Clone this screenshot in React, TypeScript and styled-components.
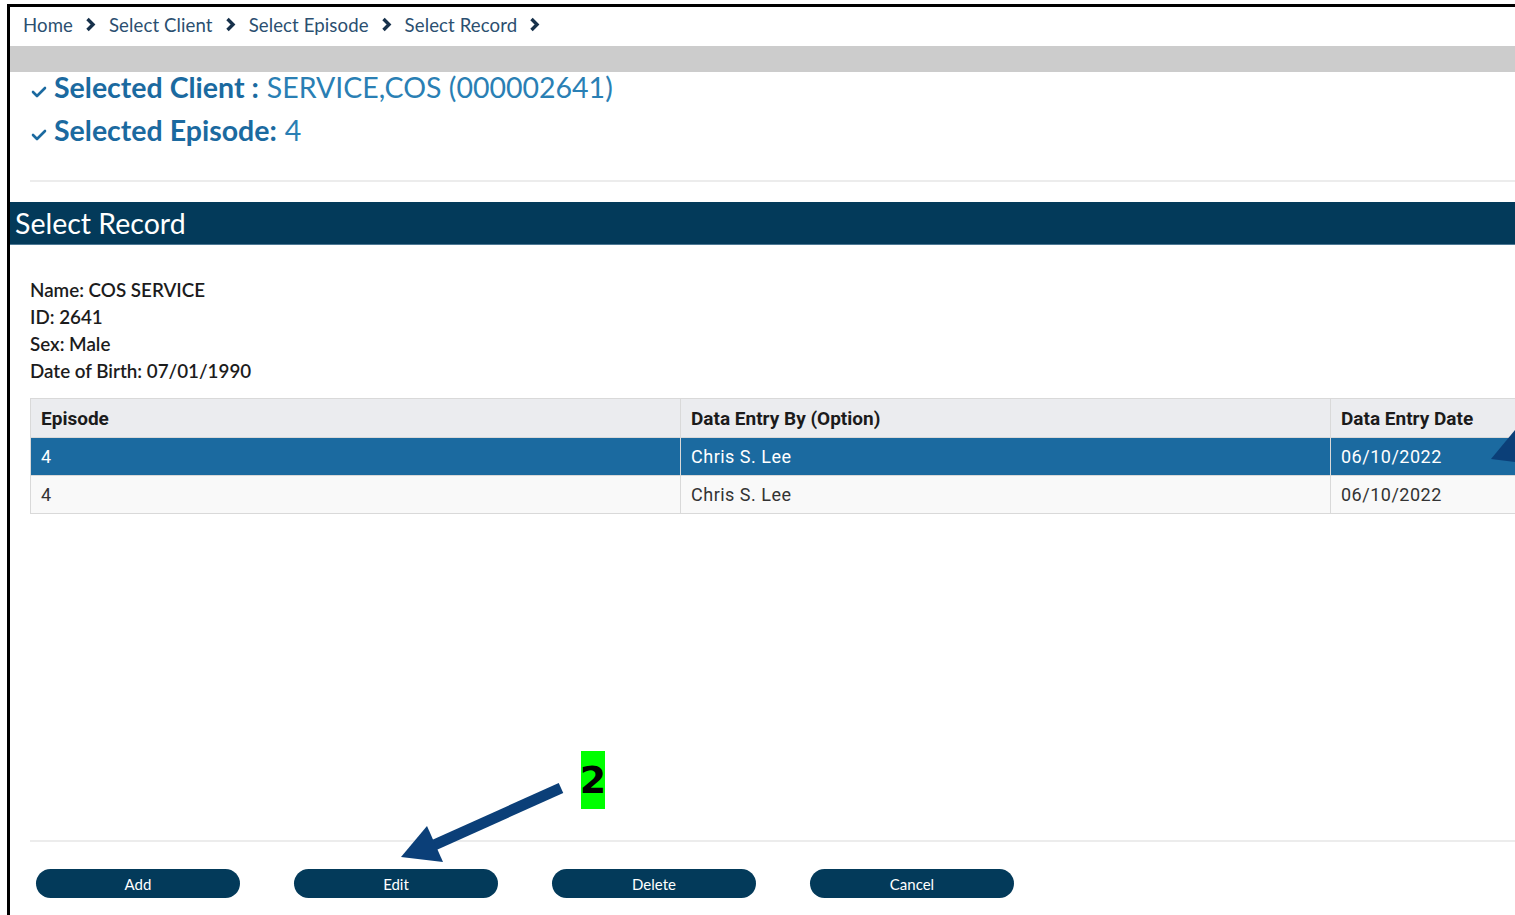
import React from "react";
import styled, { createGlobalStyle } from "styled-components";

const GlobalStyle = createGlobalStyle`
  html, body {
    margin: 0;
    padding: 0;
    background: #fff;
    font-family: Lato, "Open Sans", sans-serif;
  }
`;

interface Row {
  episode: string;
  enteredBy: string;
  date: string;
}

const rows: Row[] = [
  { episode: "4", enteredBy: "Chris S. Lee", date: "06/10/2022" },
  { episode: "4", enteredBy: "Chris S. Lee", date: "06/10/2022" },
];

const crumbs = ["Home", "Select Client", "Select Episode", "Select Record"];
const actions = ["Add", "Edit", "Delete", "Cancel"];

const Chevron = () => (
  <svg width="11" height="15" viewBox="0 0 11 15">
    <polyline points="2.5,2 8,7.5 2.5,13" fill="none" stroke="#17314b" strokeWidth="3.4" />
  </svg>
);

const Check = () => (
  <svg width="16" height="12" viewBox="0 0 16 12">
    <polyline points="2,6 6,10 14,2" fill="none" stroke="#1b6aa0" strokeWidth="2.6" strokeLinecap="round" strokeLinejoin="round" />
  </svg>
);

const App: React.FC = () => {
  return (
    <Page>
      <GlobalStyle />
      <Frame>
        <Breadcrumb>
          {crumbs.map((c) => (
            <Crumb key={c}>
              {c}
              <Chevron />
            </Crumb>
          ))}
        </Breadcrumb>
        <GrayBand />

        <Selection>
          <SelectedLine>
            <Check />
            <Label>Selected Client&nbsp;:</Label>
            <Value>SERVICE,COS (000002641)</Value>
          </SelectedLine>
          <SelectedLine>
            <Check />
            <Label>Selected Episode:</Label>
            <Value>4</Value>
          </SelectedLine>
        </Selection>
        <Divider />

        <SectionBar>Select Record</SectionBar>

        <ClientInfo>
          <div>Name: COS SERVICE</div>
          <div>ID: 2641</div>
          <div>Sex: Male</div>
          <div>Date of Birth: 07/01/1990</div>
        </ClientInfo>

        <Table>
          <colgroup>
            <col style={{ width: 650 }} />
            <col style={{ width: 650 }} />
            <col style={{ width: 260 }} />
          </colgroup>
          <thead>
            <tr>
              <HeadCell>Episode</HeadCell>
              <HeadCell>Data Entry By (Option)</HeadCell>
              <HeadCell>Data Entry Date</HeadCell>
            </tr>
          </thead>
          <tbody>
            {rows.map((r, i) => (
              <BodyRow key={i} $selected={i === 0}>
                <Cell>{r.episode}</Cell>
                <Cell>{r.enteredBy}</Cell>
                <Cell>{r.date}</Cell>
              </BodyRow>
            ))}
          </tbody>
        </Table>

        <Footer>
          <Divider />
          <ButtonRow>
            {actions.map((a) => (
              <ActionButton key={a}>{a}</ActionButton>
            ))}
          </ButtonRow>
        </Footer>
      </Frame>

      <Callout>2</Callout>
      <Annotation width="1515" height="915" viewBox="0 0 1515 915">
        <line x1="561" y1="788" x2="432" y2="846" stroke="#0b3f78" strokeWidth="11" />
        <polygon points="401,857 427,826 443,862" fill="#0b3f78" />
        <polygon points="1491,459 1515,430 1515,462" fill="#0b3f78" />
      </Annotation>
    </Page>
  );
};

export default App;

const Page = styled.div`
  position: relative;
  width: 1515px;
  height: 915px;
  overflow: hidden;
  padding: 4px 0 0 7px;
  box-sizing: border-box;
`;

const Frame = styled.div`
  display: flex;
  flex-direction: column;
  height: 911px;
  border-left: 3px solid #000;
  border-top: 3px solid #000;
  box-sizing: border-box;
`;

const Breadcrumb = styled.div`
  display: flex;
  align-items: center;
  height: 39px;
  box-sizing: border-box;
  padding: 0 0 4px 13px;
  gap: 13px;
`;

const Crumb = styled.span`
  display: flex;
  align-items: center;
  gap: 12px;
  font-size: 18.6px;
  color: #2b4f70;
  letter-spacing: 0.1px;
`;

const GrayBand = styled.div`
  height: 26px;
  background: #cccccc;
`;

const Selection = styled.div`
  display: flex;
  flex-direction: column;
  gap: 13px;
  padding: 0 0 35px 21px;
`;

const SelectedLine = styled.div`
  display: flex;
  align-items: center;
  height: 30px;
  font-size: 28.5px;
  color: #1b6aa0;

  svg {
    margin-top: 9px;
    margin-right: 7px;
  }
`;

const Label = styled.span`
  font-weight: 700;
  margin-right: 8px;
`;

const Value = styled.span`
  color: #2a7fb4;
`;

const Divider = styled.div`
  height: 2px;
  margin: 0 0 0 20px;
  background: #ececec;
`;

const SectionBar = styled.div`
  margin-top: 20px;
  height: 42px;
  display: flex;
  align-items: center;
  padding-left: 5px;
  background: #033a5a;
  border-bottom: 1px solid #4d7894;
  color: #fff;
  font-size: 28.5px;
`;

const ClientInfo = styled.div`
  display: flex;
  flex-direction: column;
  margin: 31px 0 0 20px;
  font-size: 18.8px;
  line-height: 27px;
  font-weight: 600;
  color: #1c1c1c;
`;

const Table = styled.table`
  margin: 14px 0 0 20px;
  width: 1560px;
  table-layout: fixed;
  border-collapse: collapse;
  font-family: Roboto, "Liberation Sans", sans-serif;
  font-size: 18px;
  letter-spacing: 0.5px;
`;

const HeadCell = styled.th`
  height: 38px;
  padding: 0 10px;
  text-align: left;
  font-size: 19px;
  font-weight: 700;
  letter-spacing: 0;
  background: #ebecef;
  color: #1b1b1b;
  border: 1px solid #d9d9d9;
  white-space: nowrap;
`;

const BodyRow = styled.tr<{ $selected: boolean }>`
  background: ${(p) => (p.$selected ? "#1b6aa0" : "#f9f9f9")};
  color: ${(p) => (p.$selected ? "#fff" : "#333")};
`;

const Cell = styled.td`
  height: 37px;
  padding: 0 10px;
  border: 1px solid #d9d9d9;
`;

const Footer = styled.div`
  margin-top: auto;
  padding-bottom: 17px;
`;

const ButtonRow = styled.div`
  display: flex;
  gap: 54px;
  padding: 27px 0 0 26px;
`;

const ActionButton = styled.button`
  width: 204px;
  height: 29px;
  border: none;
  border-radius: 15px;
  background: #033a5a;
  color: #fff;
  font-family: Lato, sans-serif;
  font-size: 15px;
  cursor: pointer;
`;

const Callout = styled.div`
  position: absolute;
  left: 581px;
  top: 751px;
  width: 24px;
  height: 58px;
  display: flex;
  align-items: center;
  justify-content: center;
  background: #00ff00;
  color: #000;
  font-family: "DejaVu Sans", sans-serif;
  font-weight: 700;
  font-size: 38px;
`;

const Annotation = styled.svg`
  position: absolute;
  left: 0;
  top: 0;
  pointer-events: none;
`;
